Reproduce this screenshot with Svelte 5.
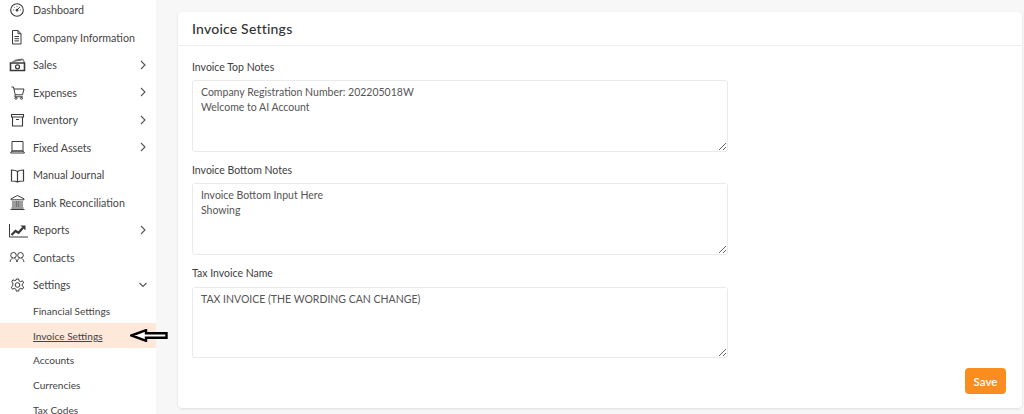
<script>
	const menu = [
		{ label: 'Dashboard', icon: 'dashboard' },
		{ label: 'Company Information', icon: 'doc' },
		{ label: 'Sales', icon: 'money', more: true },
		{ label: 'Expenses', icon: 'cart', more: true },
		{ label: 'Inventory', icon: 'archive', more: true },
		{ label: 'Fixed Assets', icon: 'laptop', more: true },
		{ label: 'Manual Journal', icon: 'book' },
		{ label: 'Bank Reconciliation', icon: 'bank' },
		{ label: 'Reports', icon: 'chart', more: true },
		{ label: 'Contacts', icon: 'people' }
	];
	const sub = ['Financial Settings', 'Invoice Settings', 'Accounts', 'Currencies', 'Tax Codes'];
	const fields = [
		{ label: 'Invoice Top Notes', value: 'Company Registration Number: 202205018W\nWelcome to AI Account' },
		{ label: 'Invoice Bottom Notes', value: 'Invoice Bottom Input Here\nShowing' },
		{ label: 'Tax Invoice Name', value: 'TAX INVOICE (THE WORDING CAN CHANGE)' }
	];
</script>

{#snippet icon(name)}
	<svg class="icon" width="22" height="18" viewBox="0 0 22 18" fill="none" stroke="#3a3a3a" stroke-width="1">
		{#if name === 'dashboard'}
			<circle cx="11" cy="9" r="6.300" stroke-width="1.100" />
			<path d="M11 9l2.800-3M7 9h.8M14.200 9h.8M11 5v.8M8.200 6.200l.5.5" />
			<circle cx="11" cy="9.200" r="1" fill="#3a3a3a" />
		{:else if name === 'doc'}
			<path d="M6.500 2.500h5.500l3 3.200V16H6.500zM12 2.500v3.200h3M8.500 8.500h4.500M8.500 10.700h4.500M8.500 12.900h4.500" />
		{:else if name === 'money'}
			<path d="M4.500 7h14v7.500h-14z" stroke-width="1.600" />
			<path d="M6.500 5.500l11-1.800.8 3.300M8.500 4.300l8-1.300" stroke-width="0.800" />
			<circle cx="11.500" cy="10.800" r="2" stroke-width="1.300" />
		{:else if name === 'cart'}
			<path d="M5.500 4h2l1.700 7.800h7.300l1.500-5.800H8M9.200 11.800l-.4 2h8" />
			<circle cx="10" cy="15.300" r="1" />
			<circle cx="15.500" cy="15.300" r="1" />
		{:else if name === 'archive'}
			<path d="M5.500 3.500h12v2.500h-12zM6.500 6v9h10V6M10 8.500h3" stroke-width="1.100" />
		{:else if name === 'laptop'}
			<path d="M6 3.500h11v9.500H6zM4.500 15h14l-1.500-2H6z" />
		{:else if name === 'book'}
			<path d="M11.500 5.500C10 4.300 7.500 4 5.500 4v11c2 0 4.500 0 6 1 1.500-1 4-1 6-1V4c-2 0-4.500.300-6 1.500zM11.500 5.500V16" stroke-width="1.200" />
		{:else if name === 'bank'}
			<path d="M11.500 2.500l6.500 3.300v1H5v-1zM5.500 15h12M4.500 16.500h14M7 8v6M9 8v6M10.800 8v6M12.200 8v6M14 8v6M16 8v6" />
		{:else if name === 'chart'}
			<path d="M3.500 3v13h18.500" stroke-width="1" />
			<path d="M5.500 14l4-4 3 1.800 4.500-5" stroke-width="2.300" />
			<path d="M14.500 4.500h5v5z" fill="#3a3a3a" stroke="none" />
		{:else if name === 'people'}
			<circle cx="7.500" cy="7.300" r="2.800" />
			<circle cx="14.500" cy="7.300" r="2.800" />
			<path d="M4 14c.300-2 1.500-3.200 2.500-4M11 14c-.300-2-1.500-3.200-2.500-4M11 14c.300-2 1.500-3.200 2.500-4M18 14c-.300-2-1.500-3.200-2.500-4" />
		{:else if name === 'gear'}
			<circle cx="11.500" cy="9" r="2.300" />
			<path d="M10.300 3h2.400l.4 1.900 1.600.8 1.800-.9 1.200 2.100-1.500 1.200v1.800l1.500 1.200-1.200 2.100-1.800-.9-1.600.9-.4 1.900h-2.400l-.4-1.900-1.600-.9-1.800.9-1.200-2.100 1.500-1.200V7.100L5.700 5.900l1.200-2.100 1.800.9 1.600-.8z" />
		{/if}
	</svg>
{/snippet}

<div class="page">
	<aside class="sidebar">
		<nav class="menu">
			{#each menu as item}
				<div class="row">
					{@render icon(item.icon)}
					<span class="label">{item.label}</span>
					{#if item.more}
						<svg class="chev" width="8" height="10" viewBox="0 0 8 10" fill="none" stroke="#555" stroke-width="1.100"><path d="M2 1l4 4-4 4" /></svg>
					{/if}
				</div>
			{/each}
			<div class="row">
				{@render icon('gear')}
				<span class="label">Settings</span>
				<svg class="chev" width="8" height="10" viewBox="0 0 8 10" fill="none" stroke="#555" stroke-width="1.100"><path d="M0.500 3l3.500 3.500 3.500-3.500" /></svg>
			</div>
			{#each sub as name}
				<div class="sub" class:active={name === 'Invoice Settings'}>
					<span>{name}</span>
					{#if name === 'Invoice Settings'}
						<svg class="arrow" width="38" height="13" viewBox="0 0 38 13">
							<path d="M1.500 6.500L16 1.200v3.100h20.500v4.400H16v3.100z" fill="#fff" stroke="#000" stroke-width="2.400" />
						</svg>
					{/if}
				</div>
			{/each}
		</nav>
	</aside>

	<main class="content">
		<section class="card">
			<h1>Invoice Settings</h1>
			<form class="body">
				{#each fields as f}
					<div class="field">
						<label for={f.label}>{f.label}</label>
						<textarea id={f.label} value={f.value}></textarea>
					</div>
				{/each}
				<div class="actions">
					<button type="button">Save</button>
				</div>
			</form>
		</section>
	</main>
</div>

<style>
	:global(body) {
		margin: 0;
		background: #f7f7f7;
		overflow: hidden;
	}

	.page {
		display: flex;
		height: 414px;
		overflow: hidden;
		font-family: Lato, "Open Sans", sans-serif;
		color: #444;
	}

	.sidebar {
		width: 156px;
		flex-shrink: 0;
		height: 414px;
		background: #fff;
		position: relative;
		z-index: 1;
	}

	.menu {
		margin-top: -4px;
	}

	.row {
		display: flex;
		align-items: center;
		height: 27.500px;
		padding: 0 9px 0 6px;
		font-size: 10.700px;
	}

	.icon {
		flex-shrink: 0;
		margin-right: 5px;
	}

	.label {
		flex: 1;
		white-space: nowrap;
	}

	.chev {
		flex-shrink: 0;
	}

	.sub {
		display: flex;
		align-items: center;
		height: 24.800px;
		padding-left: 33px;
		font-size: 10.100px;
		white-space: nowrap;
		position: relative;
	}

	.active {
		background: #fde8d9;
		text-decoration: underline;
	}

	.arrow {
		position: absolute;
		left: 130px;
		top: 6px;
	}

	.content {
		flex: 1;
		min-width: 0;
		padding: 12px 2px 6px 22px;
	}

	.card {
		height: 396px;
		box-sizing: border-box;
		background: #fff;
		border-radius: 4px;
		box-shadow: 0 1px 3px rgba(0, 0, 0, 0.1);
	}

	h1 {
		margin: 0;
		height: 33px;
		display: flex;
		align-items: center;
		padding: 0 14px;
		font-size: 14px;
		font-weight: 500;
		letter-spacing: 0.2px;
		color: #333;
		border-bottom: 1px solid #eee;
	}

	.body {
		padding: 13px 14px 0;
	}

	.field {
		margin-bottom: 10px;
	}

	.field:nth-child(3) label {
		height: 22px;
	}

	.field:nth-child(3) textarea {
		height: 71px;
	}

	label {
		display: block;
		height: 21px;
		line-height: 16px;
		font-size: 10.500px;
		color: #3e3e3e;
	}

	textarea {
		display: block;
		box-sizing: border-box;
		width: 536px;
		height: 72px;
		padding: 4px 8px;
		border: 1px solid #eaeaea;
		border-radius: 3px;
		background: #fff;
		font-family: inherit;
		font-size: 10.500px;
		line-height: 15px;
		color: #555;
		outline: none;
	}

	.actions {
		display: flex;
		justify-content: flex-end;
		margin: 1px 2px 0 0;
	}

	button {
		width: 41px;
		height: 26px;
		padding: 0;
		border: none;
		border-radius: 4px;
		background: #fb8c1e;
		color: #fff;
		font-family: inherit;
		font-size: 11.500px;
		font-weight: 600;
	}
</style>
